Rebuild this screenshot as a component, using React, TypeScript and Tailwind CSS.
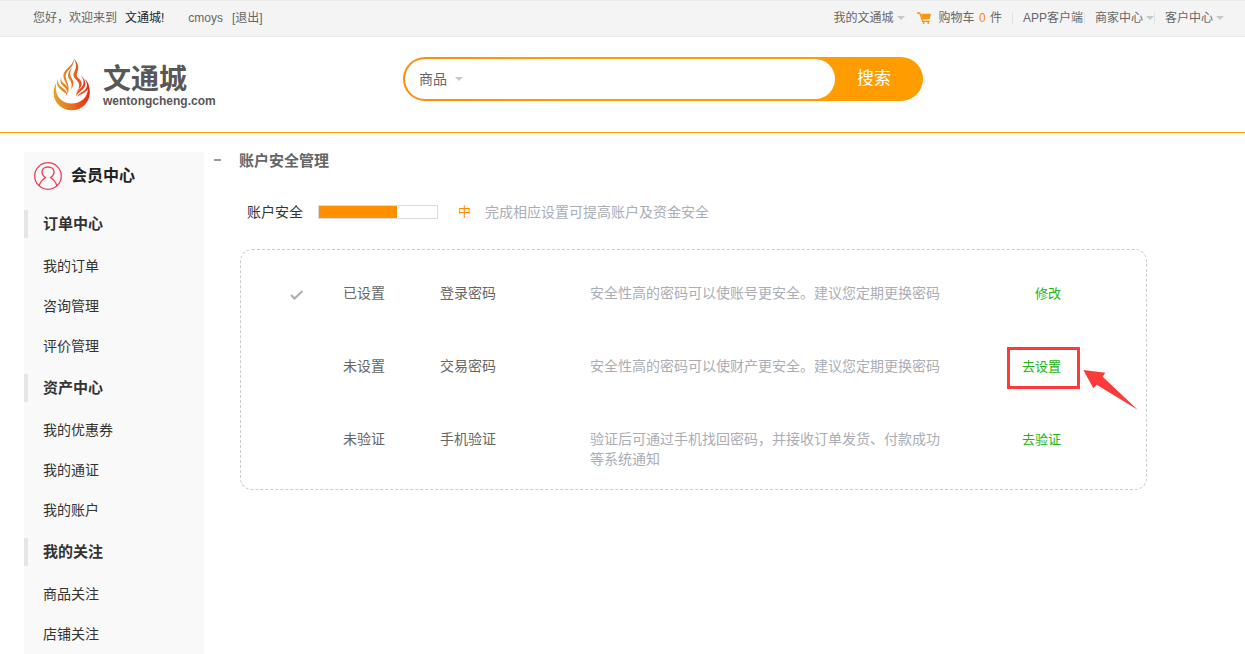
import type { ReactNode } from 'react'

type Setting = {
  done: boolean
  status: string
  name: string
  desc: string
  action: string
  marked?: boolean
}

const SECTIONS = [
  { title: '订单中心', items: ['我的订单', '咨询管理', '评价管理'] },
  { title: '资产中心', items: ['我的优惠券', '我的通证', '我的账户'] },
  { title: '我的关注', items: ['商品关注', '店铺关注'] },
]

const SETTINGS: Setting[] = [
  { done: true, status: '已设置', name: '登录密码', desc: '安全性高的密码可以使账号更安全。建议您定期更换密码', action: '修改' },
  { done: false, status: '未设置', name: '交易密码', desc: '安全性高的密码可以使财产更安全。建议您定期更换密码', action: '去设置', marked: true },
  { done: false, status: '未验证', name: '手机验证', desc: '验证后可通过手机找回密码，并接收订单发货、付款成功等系统通知', action: '去验证' },
]

const SECURITY_LEVEL = 66

function Caret() {
  return (
    <svg width="8" height="4" viewBox="0 0 8 4" className="shrink-0 text-[#c8c8c8]" aria-hidden="true">
      <path d="M0 0h8L4 4z" fill="currentColor" />
    </svg>
  )
}

function CartIcon() {
  return (
    <svg width="14" height="12" viewBox="0 0 42 36" aria-hidden="true">
      <path d="M0 3h8l9 25h21" fill="none" stroke="#f79411" strokeWidth="4" />
      <path d="M12 5h30l-4 16-21 2z" fill="#f79411" />
      <circle cx="20" cy="33" r="3" fill="#f79411" />
      <circle cx="34" cy="33" r="3" fill="#f79411" />
    </svg>
  )
}

function FlameLogo() {
  return (
    <svg width="38" height="54" viewBox="0 0 114 162" aria-hidden="true">
      <defs>
        <linearGradient id="flame" gradientUnits="userSpaceOnUse" x1="2" y1="100" x2="112" y2="100">
          <stop offset="0" stopColor="#dfa628" />
          <stop offset="0.5" stopColor="#e8701f" />
          <stop offset="1" stopColor="#e6211b" />
        </linearGradient>
      </defs>
      <g fill="url(#flame)">
        {/* bowl */}
        <path d="M10 77C-4 101 0 130 20 147c22 18 55 17 75-3 18-18 20-45 8-67 4 20 1 38-12 50-19 17-52 17-69 0C10 115 6 97 10 77z" />
        {/* left strands */}
        <path d="M14 66C8 84 16 92 28 102 36 108 40 110 42 116 44 104 36 98 28 92 18 86 14 78 14 66z" />
        <path d="M24 60C19 76 26 84 34 90 42 98 44 104 44 112 50 98 44 90 36 82 28 76 24 72 24 60z" />
        {/* tall tongue */}
        <path d="M62 4C62 28 31 36 31 56 31 72 48 84 44 104 53 86 38 74 38 57 38 40 66 32 62 4z" />
        <path d="M58 30C43 46 43 58 49 66 56 76 58 84 54 98 65 82 62 74 56 64 50 54 50 44 58 30z" />
        <path d="M62 4C72 22 70 34 64 44 56 58 67 64 73 72 83 84 78 96 70 104 90 90 89 76 80 67 72 60 69 56 73 46 79 32 76 18 62 4z" />
        {/* right strands */}
        <path d="M84 56C96 72 92 84 84 92 75 100 69 106 70 117 76 106 84 104 92 94 101 82 98 68 84 56z" />
        <path d="M95 66C107 84 102 94 92 102 84 108 77 110 73 119 84 112 94 110 102 100 111 90 108 76 95 66z" />
      </g>
    </svg>
  )
}

function MemberIcon() {
  return (
    <svg width="28" height="28" viewBox="0 0 28 28" fill="none" stroke="#ee3e4c" strokeWidth="1.3" aria-hidden="true">
      <circle cx="14" cy="14" r="13.3" />
      <path d="M5 24c1-4 3-6 6.500-8.500C9 14 8 12 8 10c0-3 2.600-5 6-5s6 2 6 5c0 2-1 4-3.500 5.500C20 18 22 20 23 24" />
    </svg>
  )
}

function CheckIcon() {
  return (
    <svg width="14" height="10" viewBox="0 0 14 10" aria-hidden="true">
      <path d="M1 5l3.500 3.500L12.500 1" fill="none" stroke="#a9adb6" strokeWidth="2" />
    </svg>
  )
}

function TopLink({ children, caret }: { children: ReactNode; caret?: boolean }) {
  return (
    <a href="#" className="flex items-center gap-[3px]">
      {children}
      {caret && <Caret />}
    </a>
  )
}

function Divider() {
  return <span className="h-3 w-px bg-[#e2e2e2]" />
}

function TopBar() {
  return (
    <div className="flex h-[37px] items-center justify-between border-y border-[#eaeaea] bg-[#f4f4f4] pr-[21px] pb-0.5 pl-[33px] text-xs whitespace-nowrap text-[#666]">
      <div className="flex items-center">
        <span>您好，欢迎来到</span>
        <a href="#" className="ml-2 text-[#222]">文通城!</a>
        <a href="#" className="ml-6">cmoys</a>
        <a href="#" className="ml-[9px]">[退出]</a>
      </div>
      <nav className="flex items-center">
        <TopLink caret>我的文通城</TopLink>
        <a href="#" className="mr-2.5 ml-3 flex items-center">
          <CartIcon />
          <span className="ml-2">购物车 <b className="mx-px font-normal text-[#ff8a00]">0</b> 件</span>
        </a>
        <Divider />
        <span className="mr-[1px] ml-2.5"><TopLink>APP客户端</TopLink></span>
        <Divider />
        <span className="ml-2.5"><TopLink caret>商家中心</TopLink></span>
        <Divider />
        <span className="ml-2.5"><TopLink caret>客户中心</TopLink></span>
      </nav>
    </div>
  )
}

function Header() {
  return (
    <header className="flex h-24 border-b border-[#ff9c00] pt-5 pl-[53px]">
      <a href="#" className="flex w-[350px] shrink-0 items-start">
        <FlameLogo />
        <span className="ml-3 flex flex-col pt-2 text-[#595757]">
          <span className="text-[28px] leading-[30px] font-bold">文通城</span>
          <span className="text-xs leading-3 font-bold">wentongcheng.com</span>
        </span>
      </a>
      <form className="flex h-11 w-[520px] rounded-[22px] bg-linear-to-r from-[#ff8a0c] to-[#ff9c00] to-30% p-0.5" onSubmit={(e) => e.preventDefault()}>
        <div className="flex flex-1 items-center rounded-[20px] bg-white pl-3.5">
          <select aria-label="搜索类型" className="w-9 appearance-none bg-transparent text-sm text-[#666] outline-none">
            <option>商品</option>
          </select>
          <Caret />
          <input aria-label="搜索内容" className="ml-3 h-8 min-w-0 flex-1 bg-transparent text-sm outline-none" />
        </div>
        <button type="submit" className="w-[86px] pr-2 text-[17px] text-white">搜索</button>
      </form>
    </header>
  )
}

function Sidebar() {
  return (
    <aside className="w-[180px] shrink-0 bg-[#f9f9f9] text-[#333]">
      <h2 className="flex h-12 items-center gap-[9px] pl-2.5 text-base font-bold text-[#222]">
        <MemberIcon />
        会员中心
      </h2>
      <nav className="flex flex-col gap-2 pt-2.5">
        {SECTIONS.map((s) => (
          <section key={s.title}>
            <h3 className="mb-2 border-l-4 border-[#e6e6e6] pl-[15px] text-[15px] leading-7 font-bold">{s.title}</h3>
            <ul>
              {s.items.map((item) => (
                <li key={item}>
                  <a href="#" className="block pl-[19px] text-sm leading-10">{item}</a>
                </li>
              ))}
            </ul>
          </section>
        ))}
      </nav>
    </aside>
  )
}

/** Red frame and arrow pointing at the action to click. */
function Marker() {
  return (
    <>
      <span className="pointer-events-none absolute -top-[9px] -right-[19px] -bottom-[13px] -left-[15px] border-3 border-[#fc3a3a]" />
      <svg width="56" height="42" viewBox="0 0 168 126" className="pointer-events-none absolute top-[13px] left-full ml-[22px]" aria-hidden="true">
        <path d="M1 3L67 11 59 23 164 122 41 47 31 58z" fill="#fc3a3a" />
      </svg>
    </>
  )
}

function SettingRow({ item }: { item: Setting }) {
  return (
    <li className="grid grid-cols-[102px_97px_150px_1fr_auto] text-sm leading-5 text-[#666]">
      <span className="pt-[7px] pl-[49px]">{item.done && <CheckIcon />}</span>
      <span>{item.status}</span>
      <span>{item.name}</span>
      <p className="max-w-[352px] text-[#aaadb5]">{item.desc}</p>
      <span className="relative h-5">
        <a href="#" className="text-[13px] text-[#22b414]">{item.action}</a>
        {item.marked && <Marker />}
      </span>
    </li>
  )
}

export default function App() {
  return (
    <div lang="zh-CN" className="bg-white font-['Liberation_Sans','Noto_Sans_CJK_SC',sans-serif]">
      <TopBar />
      <Header />
      <div className="flex pt-[19px] pl-6">
        <Sidebar />
        <main className="-mt-px min-w-0 flex-1 pr-[98px]">
          <h1 className="flex text-[15px] leading-5 font-bold text-[#666]">
            <span className="w-[35px] shrink-0 pl-2.5 text-[#999]">
              <span className="mt-2 block h-0.5 w-[7px] bg-current" />
            </span>
            账户安全管理
          </h1>
          <div className="mt-[31px] ml-[43px] flex items-center text-sm leading-5">
            <span id="level" className="text-[#333]">账户安全</span>
            <div role="progressbar" aria-labelledby="level" aria-valuenow={SECURITY_LEVEL} className="ml-[15px] h-3.5 w-[120px] border border-[#ddd]">
              <div className="h-full bg-[#ff8f00]" style={{ width: `${SECURITY_LEVEL}%` }} />
            </div>
            <span className="ml-5 text-[13px] text-[#ff8a00]">中</span>
            <span className="ml-3.5 text-[#aaadb5]">完成相应设置可提高账户及资金安全</span>
          </div>
          <ul className="mt-[27px] ml-9 flex flex-col gap-[53px] rounded-xl border border-dashed border-[#ccc] pt-[33px] pr-[85px] pb-5">
            {SETTINGS.map((item) => (
              <SettingRow key={item.name} item={item} />
            ))}
          </ul>
        </main>
      </div>
    </div>
  )
}
